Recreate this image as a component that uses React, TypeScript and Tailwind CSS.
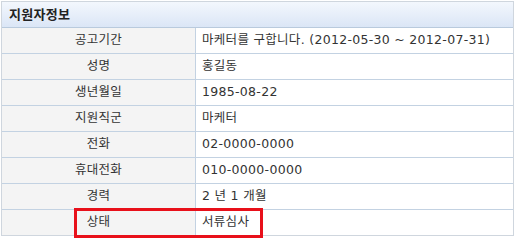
const rows: [string, string][] = [
  ['공고기간', '마케터를 구합니다. (2012-05-30 ~ 2012-07-31)'],
  ['성명', '홍길동'],
  ['생년월일', '1985-08-22'],
  ['지원직군', '마케터'],
  ['전화', '02-0000-0000'],
  ['휴대전화', '010-0000-0000'],
  ['경력', '2 년 1 개월'],
  ['상태', '서류심사'],
];

export default function App() {
  return (
    <div
      className="relative h-[240px] w-[516px] bg-white pl-[1px] pt-[1px]"
      style={{ fontFamily: '"DejaVu Sans", "Noto Sans CJK KR", sans-serif' }}
    >
      <div className="w-[513px] border border-[#cfd6de] text-[12.5px] tracking-[0.3px] text-[#333]">
        <div className="flex h-[26px] items-center border-b border-[#b9cadd] bg-gradient-to-b from-[#f3f7fd] to-[#dbe6f6] pl-[7px] text-[13px] font-bold text-[#222]">
          지원자정보
        </div>
        {rows.map(([label, value], i) => (
          <div
            key={label}
            className={
              i < rows.length - 1
                ? 'flex h-[26px] border-b border-[#c3d2e2]'
                : 'flex h-[25px]'
            }
          >
            <div className="flex w-[194px] items-center justify-center border-r border-[#c3d2e2] bg-[#f4f4f4]">
              {label}
            </div>
            <div className="flex flex-1 items-center pl-[6px]">{value}</div>
          </div>
        ))}
      </div>
      <div className="absolute left-[74px] top-[208px] h-[30px] w-[189px] border-[3px] border-[#e8101a]" />
    </div>
  );
}
